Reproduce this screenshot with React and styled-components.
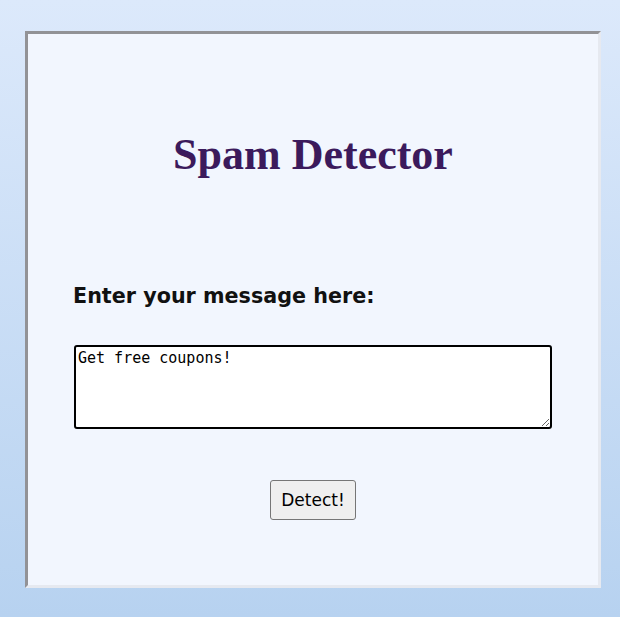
import React, { useState } from 'react';
import styled, { createGlobalStyle } from 'styled-components';

const GlobalStyle = createGlobalStyle`
    html, body {
        margin: 0;
        padding: 0;
    }
    body {
        min-height: 617px;
        background: linear-gradient(to bottom, #dce9fb 0%, #b7d2f0 100%);
        font-family: "DejaVu Sans", "Liberation Sans", sans-serif;
    }
`;

const Page = styled.div`
    padding: 31px 19px 29px 25px;
`;

const Card = styled.div`
    box-sizing: border-box;
    width: 576px;
    height: 557px;
    border: 3px solid #e6e9f0;
    border-top-color: #929296;
    border-left-color: #929296;
    background: #f2f6fe;
    padding: 0 46px;
    display: flex;
    flex-direction: column;
`;

const Title = styled.h1`
    margin: 97px 0 0;
    text-align: center;
    font-family: "Liberation Serif", "DejaVu Serif", serif;
    font-weight: 700;
    font-size: 44px;
    line-height: 48px;
    color: #3b1a5c;
`;

const Label = styled.h3`
    margin: 104px 0 0 -1px;
    font-family: "DejaVu Sans", "Liberation Sans", sans-serif;
    font-weight: 700;
    font-size: 20.7px;
    line-height: 26px;
    color: #111;
`;

const Message = styled.textarea`
    box-sizing: border-box;
    margin-top: 36px;
    width: 478px;
    height: 84px;
    border: 2px solid #000;
    border-radius: 3px;
    padding: 2px 2px;
    font-family: "DejaVu Sans Mono", monospace;
    font-size: 15px;
    line-height: 18px;
    background: #fff;
    color: #000;
`;

const Detect = styled.button`
    align-self: center;
    margin-top: 51px;
    height: 40px;
    padding: 0 10px;
    background: #efefef;
    border: 1px solid #767676;
    border-radius: 3px;
    font-family: "DejaVu Sans", "Liberation Sans", sans-serif;
    font-size: 17px;
    color: #000;
`;

export default function App() {
    const [message, setMessage] = useState('Get free coupons!');

    return (
        <>
            <GlobalStyle />
            <Page>
                <Card>
                    <Title>Spam Detector</Title>
                    <Label>Enter your message here:</Label>
                    <Message value={message} onChange={(e) => setMessage(e.target.value)} />
                    <Detect type="button">Detect!</Detect>
                </Card>
            </Page>
        </>
    );
}
